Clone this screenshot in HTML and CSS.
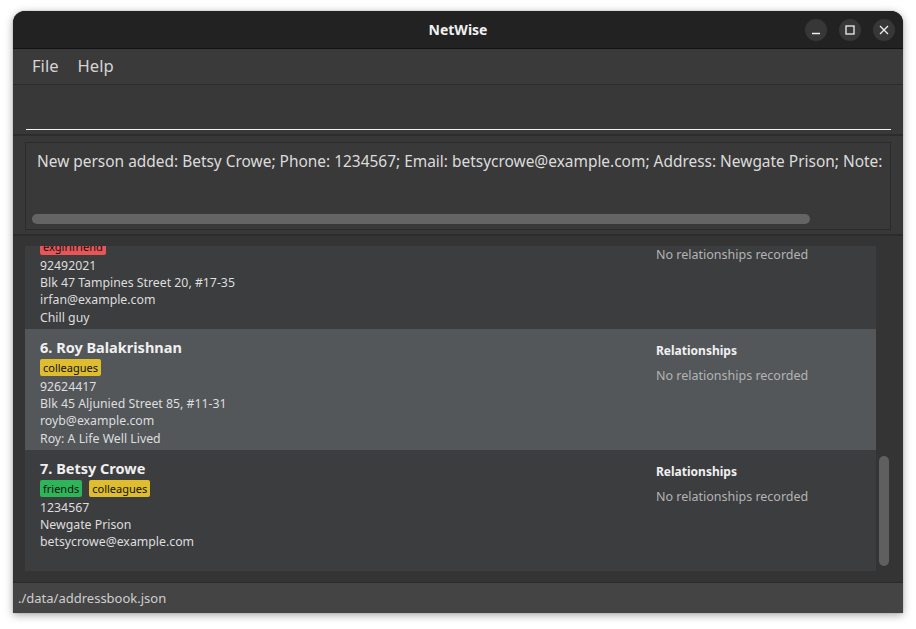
FILE: index.html
```html
<!DOCTYPE html>
<html>
<head>
<meta charset="utf-8">
<title>NetWise</title>
<link rel="stylesheet" href="styles.css">
</head>
<body>
<div class="window">
  <div class="titlebar">
    <div class="title">NetWise</div>
    <div class="controls">
      <span class="ctl"><svg width="10" height="10" viewBox="0 0 10 10"><path d="M1 8.5h8" stroke="#eee" stroke-width="1.3"/></svg></span>
      <span class="ctl"><svg width="10" height="10" viewBox="0 0 10 10"><rect x="1" y="1" width="8" height="8" fill="none" stroke="#eee" stroke-width="1.3"/></svg></span>
      <span class="ctl"><svg width="10" height="10" viewBox="0 0 10 10"><path d="M1 1l8 8M9 1l-8 8" stroke="#eee" stroke-width="1.3"/></svg></span>
    </div>
  </div>
  <div class="menubar">
    <span class="menu">File</span>
    <span class="menu">Help</span>
  </div>
  <div class="command">
    <div class="cmdline"></div>
  </div>
  <div class="result">
    <div class="resultbox">
      <div class="resulttext">New person added: Betsy Crowe; Phone: 1234567; Email: betsycrowe@example.com; Address: Newgate Prison; Note:</div>
      <div class="hscroll"><div class="hthumb"></div></div>
    </div>
  </div>
  <div class="listpanel">
    <div class="viewport">
      <div class="listinner">
        <div class="card">
          <div class="info">
            <div class="name">5. Irfan Ibrahim</div>
            <div class="tags"><span class="tag red">exgirlfriend</span></div>
            <div class="line">92492021</div>
            <div class="line">Blk 47 Tampines Street 20, #17-35</div>
            <div class="line">irfan@example.com</div>
            <div class="line">Chill guy</div>
          </div>
          <div class="rel">
            <div class="relhead">Relationships</div>
            <div class="relnone">No relationships recorded</div>
          </div>
        </div>
        <div class="card selected">
          <div class="info">
            <div class="name">6. Roy Balakrishnan</div>
            <div class="tags"><span class="tag yellow">colleagues</span></div>
            <div class="line">92624417</div>
            <div class="line">Blk 45 Aljunied Street 85, #11-31</div>
            <div class="line">royb@example.com</div>
            <div class="line">Roy: A Life Well Lived</div>
          </div>
          <div class="rel">
            <div class="relhead">Relationships</div>
            <div class="relnone">No relationships recorded</div>
          </div>
        </div>
        <div class="card">
          <div class="info">
            <div class="name">7. Betsy Crowe</div>
            <div class="tags"><span class="tag green">friends</span><span class="tag yellow">colleagues</span></div>
            <div class="line">1234567</div>
            <div class="line">Newgate Prison</div>
            <div class="line">betsycrowe@example.com</div>
          </div>
          <div class="rel">
            <div class="relhead">Relationships</div>
            <div class="relnone">No relationships recorded</div>
          </div>
        </div>
      </div>
    </div>
    <div class="vscroll"><div class="vthumb"></div></div>
  </div>
  <div class="statusbar">./data/addressbook.json</div>
</div>
</body>
</html>
```

FILE: styles.css
```css
* { box-sizing: border-box; }
html, body { margin: 0; padding: 0; }
body {
  background: #ffffff;
  font-family: "Noto Sans", "Open Sans", sans-serif;
  width: 916px;
  height: 629px;
  overflow: hidden;
  padding: 11px 13px 0 13px;
}
.window {
  width: 890px;
  height: 602px;
  border-radius: 12px 12px 0 0;
  background: #383838;
  box-shadow: 0 2px 8px rgba(0,0,0,0.35), 0 0 1px rgba(0,0,0,0.5);
  display: flex;
  flex-direction: column;
  overflow: hidden;
}
.titlebar {
  height: 38px;
  flex: none;
  background: #222222;
  border-bottom: 1px solid #121212;
  display: flex;
  align-items: center;
  justify-content: center;
  position: relative;
}
.title {
  color: #f0f0f0;
  font-weight: bold;
  font-size: 14px;
}
.controls {
  position: absolute;
  right: 8px;
  top: 8px;
  display: flex;
  gap: 12px;
}
.ctl {
  width: 22px;
  height: 22px;
  border-radius: 50%;
  background: #373737;
  display: flex;
  align-items: center;
  justify-content: center;
}
.menubar {
  height: 36px;
  flex: none;
  background: #3a3a3a;
  border-bottom: 1px solid #2c2c2c;
  display: flex;
  align-items: center;
  padding-left: 19px;
  gap: 19px;
}
.menu {
  color: #d4d4d4;
  font-size: 16.6px;
  padding-bottom: 2px;
}
.command {
  height: 51px;
  flex: none;
  background: #383838;
  border-bottom: 2px solid #2c2c2c;
  padding: 0 12px 0 13px;
  display: flex;
  flex-direction: column;
  justify-content: flex-end;
}
.cmdline {
  height: 1px;
  background: #f2f2f2;
  margin-bottom: 4px;
}
.result {
  height: 100px;
  flex: none;
  background: #383838;
  border-bottom: 2px solid #2c2c2c;
  padding: 6px 12px 0 12px;
}
.resultbox {
  height: 88px;
  border: 1px solid #2b2b2b;
  background: #393939;
  display: flex;
  flex-direction: column;
  padding: 0 6px;
}
.resulttext {
  color: #dcdcdc;
  font-size: 15.45px;
  white-space: nowrap;
  overflow: hidden;
  padding: 6px 0 0 5px;
  line-height: 24px;
  flex: 1;
}
.hscroll {
  height: 12px;
  margin-bottom: 3px;
}
.hthumb {
  width: 778px;
  height: 10px;
  border-radius: 5px;
  background: #646464;
}
.listpanel {
  flex: 1;
  background: #343434;
  display: flex;
  padding: 10px 12px 11px 12px;
  min-height: 0;
}
.viewport {
  width: 851px;
  height: 325px;
  overflow: hidden;
  background: #343434;
}
.listinner {
  margin-top: -38px;
}
.card {
  height: 121px;
  background: #3c3d3f;
  display: flex;
  padding: 7px 0 0 15px;
}
.card.selected { background: #53575a; }
.info {
  width: 616px;
  flex: none;
}
.name {
  color: #f0f0f0;
  font-weight: bold;
  font-size: 14.5px;
  line-height: 22px;
}
.tags {
  display: flex;
  gap: 7px;
  height: 17px;
  margin: 1px 0 2px 0;
}
.tag {
  font-size: 11px;
  line-height: 17px;
  padding: 0 3px;
  border-radius: 2px;
  color: #111;
}
.tag.red { background: #e65657; }
.tag.yellow { background: #dfbd2e; }
.tag.green { background: #2db55a; }
.line {
  color: #dedede;
  font-size: 12.3px;
  line-height: 17.2px;
}
.rel {
  padding-top: 5px;
}
.relhead {
  color: #f0f0f0;
  font-weight: bold;
  font-size: 12px;
  line-height: 20px;
}
.relnone {
  color: #b4b4b4;
  font-size: 12.5px;
  line-height: 30px;
}
.vscroll {
  width: 15px;
  height: 325px;
  display: flex;
  flex-direction: column;
  justify-content: flex-end;
  padding: 0 2px 5px 3px;
}
.vthumb {
  height: 110px;
  width: 10px;
  border-radius: 5px;
  background: #5f5f5f;
}
.statusbar {
  height: 31px;
  flex: none;
  background: #444444;
  border-top: 1px solid #2a2a2a;
  color: #cfcfcf;
  font-size: 13px;
  padding: 3px 0 0 5px;
  line-height: 24px;
}
```
